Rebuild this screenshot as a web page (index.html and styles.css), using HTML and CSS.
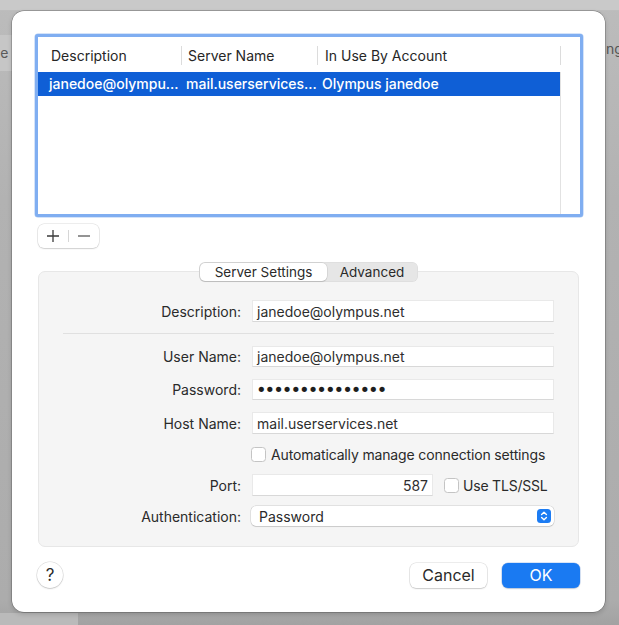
FILE: index.html
```html
<!DOCTYPE html>
<html>
<head>
<meta charset="utf-8">
<link rel="stylesheet" href="styles.css">
</head>
<body>
<div class="backdrop">
  <div class="bd-top"></div>
  <div class="bd-left-band"><span class="bd-frag-left">ne</span></div>
  <div class="bd-right-frag">ng</div>
  <div class="bd-bottom-left"></div>
</div>
<div class="sheet">
  <div class="table-box">
    <div class="tbl">
      <div class="tbl-head">
        <div class="hcell c1">Description</div>
        <div class="hcell c2">Server Name</div>
        <div class="hcell c3">In Use By Account</div>
        <div class="hcell c4"></div>
      </div>
      <div class="tbl-row selected">
        <div class="cell c1">janedoe@olympu…</div>
        <div class="cell c2">mail.userservices…</div>
        <div class="cell c3">Olympus janedoe</div>
        <div class="cell c4"></div>
      </div>
      <div class="tbl-fill">
        <div class="fill-main"></div>
        <div class="fill-side"></div>
      </div>
    </div>
  </div>

  <div class="addremove">
    <span class="ar-btn"><svg width="14" height="14" viewBox="0 0 14 14"><path d="M7 1v12M1 7h12" stroke="#3a3a3a" stroke-width="1.3"/></svg></span>
    <span class="ar-sep"></span>
    <span class="ar-btn"><svg width="14" height="14" viewBox="0 0 14 14"><path d="M1 7h12" stroke="#5a5a5a" stroke-width="1.3"/></svg></span>
  </div>

  <div class="settings">
    <div class="tabs">
      <div class="tab active">Server Settings</div>
      <div class="tab">Advanced</div>
    </div>
    <div class="group">
      <div class="row r-desc">
        <div class="label">Description:</div>
        <div class="field">janedoe@olympus.net</div>
      </div>
      <div class="divider"></div>
      <div class="row">
        <div class="label">User Name:</div>
        <div class="field">janedoe@olympus.net</div>
      </div>
      <div class="row r-gap">
        <div class="label">Password:</div>
        <div class="field dots">•••••••••••••••</div>
      </div>
      <div class="row r-gap r-host">
        <div class="label">Host Name:</div>
        <div class="field">mail.userservices.net</div>
      </div>
      <div class="row r-check">
        <div class="label"></div>
        <div class="checkline"><span class="checkbox"></span><span class="checktext">Automatically manage connection settings</span></div>
      </div>
      <div class="row r-port">
        <div class="label">Port:</div>
        <div class="portline">
          <div class="field port">587</div>
          <span class="checkbox"></span><span class="tls">Use TLS/SSL</span>
        </div>
      </div>
      <div class="row r-auth">
        <div class="label">Authentication:</div>
        <div class="popup">
          <span>Password</span>
          <span class="stepper"><svg width="14" height="14" viewBox="0 0 14 14"><rect width="14" height="14" rx="3.5" fill="#1c7cf3"/><path d="M4.6 5.6L7 3.3l2.4 2.3M4.6 8.4L7 10.7l2.4-2.3" fill="none" stroke="#fff" stroke-width="1.4" stroke-linecap="round" stroke-linejoin="round"/></svg></span>
        </div>
      </div>
    </div>
  </div>

  <div class="bottom">
    <div class="help">?</div>
    <div class="actions">
      <div class="btn">Cancel</div>
      <div class="btn primary">OK</div>
    </div>
  </div>
</div>
</body>
</html>
```

FILE: styles.css
```css
* { box-sizing: border-box; }
html, body { margin: 0; padding: 0; }
body {
  width: 619px;
  height: 625px;
  overflow: hidden;
  position: relative;
  background: linear-gradient(180deg, #bcbcbc 0px, #b2b2b2 200px, #acacac 600px, #a2a2a2 625px);
  font-family: "Inter", "Liberation Sans", sans-serif;
  font-size: 14px;
  color: #2a2a2a;
  padding: 11px 0 0 12px;
}

/* backdrop (window behind the sheet) */
.backdrop { position: absolute; inset: 0; z-index: 0; }
.bd-top { position: absolute; left: 0; top: 0; width: 619px; height: 11px; background: #c9c9c9; border-bottom: 1px solid #bdbdbd; }
.bd-left-band { position: absolute; left: 0; top: 35px; width: 20px; height: 36px; background: #c6c6c6; overflow: hidden; }
.bd-frag-left { position: absolute; left: -8px; top: 9px; color: #5a5a5a; font-size: 14px; }
.bd-right-frag { position: absolute; left: 606px; top: 40px; color: #555; font-size: 14px; }
.bd-bottom-left { position: absolute; left: 0; top: 613px; width: 78px; height: 12px; background: #bababa; }

/* sheet */
.sheet {
  position: relative;
  z-index: 1;
  width: 593px;
  height: 601px;
  background: #ffffff;
  border-radius: 12px;
  box-shadow: 0 0 0 0.5px rgba(0,0,0,0.35), 0 2px 5px rgba(0,0,0,0.18);
  padding: 23px 22px 24px 23px;
  display: flex;
  flex-direction: column;
}

/* table */
.table-box {
  height: 183px;
  border: 3px solid #80aef1;
  border-radius: 3px;
  background: #fff;
  box-shadow: 0 0 0 0.5px #a9c8f3;
}
.tbl { height: 100%; display: flex; flex-direction: column; }
.tbl-head, .tbl-row {
  display: grid;
  grid-template-columns: 143px 136px 243px 20px;
}
.tbl-head { height: 35px; align-items: center; padding-top: 2px; }
.hcell { height: 19px; line-height: 19px; color: #262626; }
.hcell.c1 { padding-left: 13px; }
.hcell.c2, .hcell.c3 { border-left: 1px solid #dcdcdc; padding-left: 6px; }
.hcell.c3 { padding-left: 7px; }
.hcell.c4 { border-left: 1px solid #dcdcdc; }
.tbl-row { height: 24px; }
.cell { line-height: 24px; white-space: nowrap; overflow: hidden; }
.tbl-row.selected .cell.c1, .tbl-row.selected .cell.c2, .tbl-row.selected .cell.c3 {
  background: #0f5fd6; color: #fff; font-weight: 500;
}
.cell.c1 { padding-left: 11px; }
.cell.c2 { padding-left: 5px; }
.cell.c3 { padding-left: 5px; }
.cell.c4 { border-left: 1px solid #e2e2e2; }
.tbl-fill { flex: 1; display: grid; grid-template-columns: 522px 20px; }
.fill-side { border-left: 1px solid #e2e2e2; }

/* add / remove */
.addremove {
  margin: 7px 0 0 3px;
  width: 61px;
  height: 24px;
  display: flex;
  align-items: center;
  background: #fff;
  border-radius: 6px;
  box-shadow: 0 0 0 0.5px rgba(0,0,0,0.14), 0 1px 1.5px rgba(0,0,0,0.12);
}
.ar-btn { flex: 1; display: flex; justify-content: center; align-items: center; height: 100%; }
.ar-sep { width: 1px; height: 12px; background: #d6d6d6; }

/* settings group */
.settings { margin: 14px 4px 0 3px; display: flex; flex-direction: column; }
.tabs {
  align-self: center;
  position: relative;
  z-index: 2;
  display: flex;
  height: 20px;
  width: 219px;
  padding: 1px;
  background: #e6e6e6;
  border-radius: 6px;
  box-shadow: inset 0 0 0 0.5px rgba(0,0,0,0.06);
  margin-bottom: -11px;
}
.tab { height: 18px; line-height: 18px; text-align: center; color: #2a2a2a; font-size: 13.5px; }
.tab.active {
  width: 127px;
  background: #fff;
  border-radius: 5px;
  box-shadow: 0 0 0 0.5px rgba(0,0,0,0.12), 0 1px 1px rgba(0,0,0,0.1);
}
.tab:not(.active) { flex: 1; }

.group {
  height: 276px;
  background: #f5f5f5;
  border: 1px solid #e7e7e7;
  border-radius: 7px;
  padding: 28px 24px 0 0;
  display: flex;
  flex-direction: column;
}
.row { display: flex; align-items: center; height: 21px; }
.r-desc { height: 22px; }
.r-gap { margin-top: 12px; }
.r-host { height: 22px; }
.r-check { margin-top: 10px; height: 20px; }
.r-port { margin-top: 10px; height: 22px; }
.r-auth { margin-top: 10px; height: 20px; }
.label { width: 202px; text-align: right; padding-right: 0; color: #2a2a2a; flex: none; }
.field {
  margin-left: 11px;
  width: 303px;
  height: 100%;
  background: #fff;
  border: 1px solid #e9e9e9;
  border-bottom-color: #d8d8d8;
  padding-left: 4px;
  display: flex;
  align-items: center;
  color: #2e2e2e;
  white-space: nowrap;
}
.field.dots {
  font-family: "DejaVu Sans", sans-serif;
  font-size: 18px;
  letter-spacing: -2px;
  color: #1e1e1e;
  padding-left: 3px;
  padding-bottom: 1px;
}
.divider { height: 1px; background: #e0e0e0; margin: 11px 0 12px 24px; }

.checkline { margin-left: 10px; display: flex; align-items: center; gap: 5px; color: #2a2a2a; white-space: nowrap; }
.checktext { letter-spacing: -0.15px; }
.checkbox {
  width: 15px; height: 15px;
  background: #fff;
  border: 1px solid #c4c4c4;
  border-radius: 3.5px;
  flex: none;
}
.portline { display: flex; align-items: center; height: 100%; white-space: nowrap; }
.field.port { width: 181px; justify-content: flex-end; padding-right: 4px; padding-left: 0; }
.portline .checkbox { margin-left: 11px; }
.tls { margin-left: 4px; letter-spacing: -0.2px; }

.popup {
  margin-left: 10px;
  width: 305px;
  height: 100%;
  background: #fff;
  border-radius: 5px;
  box-shadow: 0 0 0 0.5px rgba(0,0,0,0.16), 0 1px 1px rgba(0,0,0,0.1);
  display: flex;
  align-items: center;
  justify-content: space-between;
  padding: 0 3px 0 8px;
}
.stepper { display: flex; }

/* bottom */
.bottom { margin-top: 15px; display: flex; justify-content: space-between; align-items: center; height: 26px; }
.help {
  margin-left: 2px;
  width: 26px; height: 26px;
  border-radius: 50%;
  background: #fff;
  box-shadow: 0 0 0 0.5px rgba(0,0,0,0.16), 0 1px 1.5px rgba(0,0,0,0.14);
  display: flex; align-items: center; justify-content: center;
  font-size: 17px; color: #2a2a2a;
}
.actions { display: flex; gap: 15px; margin-right: 3px; }
.btn {
  width: 77px; height: 25px;
  border-radius: 6px;
  background: #fff;
  box-shadow: 0 0 0 0.5px rgba(0,0,0,0.15), 0 1px 1.5px rgba(0,0,0,0.14);
  display: flex; align-items: center; justify-content: center;
  font-size: 16px; color: #2a2a2a;
}
.btn.primary { width: 78px; background: #1a7af2; color: #fff; box-shadow: 0 0 0 0.5px rgba(0,80,200,0.3), 0 1px 1.5px rgba(0,0,0,0.14); }
```
